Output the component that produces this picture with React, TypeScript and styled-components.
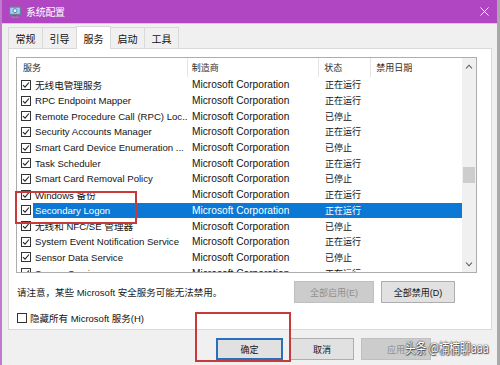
import styled, { createGlobalStyle, css } from 'styled-components';

const GlobalStyle = createGlobalStyle`
    html, body {
        margin: 0;
        padding: 0;
        width: 500px;
        height: 365px;
        overflow: hidden;
        background: #ffffff;
    }
    * {
        box-sizing: border-box;
    }
`;

const FONT = `"Liberation Sans", "Noto Sans CJK SC", sans-serif`;

const Window = styled.div`
    position: relative;
    width: 500px;
    height: 365px;
    display: flex;
    flex-direction: column;
    background: #f0f0f0;
    border-left: 2px solid #c07ccc;
    border-right: 3px solid #a9a9a9;
    font-family: ${FONT};
    color: #111;
    overflow: hidden;
`;

const TitleBar = styled.div`
    height: 24px;
    flex-shrink: 0;
    display: flex;
    align-items: center;
    padding: 0 8px 0 6px;
    background: #b046c1;
    border-bottom: 1px solid #eab8ee;
    color: #fff;
    font-size: 10px;
`;

const TitleText = styled.span`
    margin-left: 4px;
    flex: 1;
    letter-spacing: -0.3px;
`;

const Tabs = styled.div`
    display: flex;
    align-items: flex-end;
    height: 24px;
    padding-left: 6px;
`;

const Tab = styled.div<{ $active?: boolean }>`
    width: 35px;
    height: 21px;
    display: flex;
    align-items: center;
    justify-content: center;
    font-size: 10px;
    border: 1px solid #d9d9d9;
    border-bottom: none;
    margin-right: -1px;
    background: #f0f0f0;
    ${(p) =>
        p.$active &&
        css`
            height: 23px;
            background: #ffffff;
            position: relative;
            z-index: 1;
            margin-bottom: -1px;
        `}
`;

const Panel = styled.div`
    margin: 0 5px 0 6px;
    height: 282px;
    background: #ffffff;
    border: 1px solid #d9d9d9;
    padding: 8px 14px 0 7px;
    display: flex;
    flex-direction: column;
`;

const ListBox = styled.div`
    height: 216px;
    border: 1px solid #adadad;
    display: flex;
    overflow: hidden;
`;

const ListContent = styled.div`
    width: 446px;
    display: flex;
    flex-direction: column;
    overflow: hidden;
`;

const HeaderRow = styled.div`
    height: 19px;
    display: flex;
    flex-shrink: 0;
    font-size: 9px;
    color: #2b2b2b;
`;

const HeaderCell = styled.div<{ $w: number; $pad: number; $last?: boolean }>`
    width: ${(p) => p.$w}px;
    padding-left: ${(p) => p.$pad}px;
    display: flex;
    align-items: center;
    border-right: ${(p) => (p.$last ? 'none' : '1px solid #e5e5e5')};
`;

const Row = styled.div`
    height: 15.7px;
    display: flex;
    align-items: center;
    flex-shrink: 0;
`;

const CheckArea = styled.div`
    width: 16px;
    height: 100%;
    display: flex;
    align-items: center;
    padding-left: 4px;
`;

const Box = styled.span`
    width: 10px;
    height: 10px;
    border: 1px solid #333;
    background: #fff;
    display: flex;
    align-items: center;
    justify-content: center;
`;

const RowBody = styled.div<{ $selected?: boolean }>`
    flex: 1;
    height: 100%;
    display: flex;
    align-items: center;
    background: ${(p) => (p.$selected ? '#0a78d4' : 'transparent')};
    color: ${(p) => (p.$selected ? '#ffffff' : '#141414')};
`;

const Cell = styled.div<{ $w: number; $pad: number; $size: number }>`
    width: ${(p) => p.$w}px;
    padding-left: ${(p) => p.$pad}px;
    white-space: nowrap;
    overflow: hidden;
    font-size: ${(p) => p.$size}px;
`;

const ScrollBar = styled.div`
    width: 14px;
    background: #f0f0f0;
    display: flex;
    flex-direction: column;
    align-items: center;
    padding-top: 4px;
`;

const ScrollThumb = styled.div`
    width: 12px;
    height: 16px;
    margin-top: 97px;
    background: #cdcdcd;
`;

const ScrollArrow = styled.div<{ $down?: boolean }>`
    margin-top: ${(p) => (p.$down ? 'auto' : '0')};
    margin-bottom: ${(p) => (p.$down ? '4px' : '0')};
    height: 8px;
    display: flex;
    align-items: center;
`;

const NoticeRow = styled.div`
    margin-top: 8px;
    height: 22px;
    display: flex;
    align-items: center;
    padding-left: 1px;
    padding-right: 22px;
`;

const NoticeText = styled.span`
    flex: 1;
    font-size: 9.5px;
    color: #1a1a1a;
`;

const Button = styled.div<{ $w: number; $disabled?: boolean; $focused?: boolean }>`
    width: ${(p) => p.$w}px;
    height: 22px;
    display: flex;
    align-items: center;
    justify-content: center;
    font-size: 9px;
    background: ${(p) => (p.$disabled ? '#cccccc' : '#e1e1e1')};
    border: 1px solid ${(p) => (p.$disabled ? '#bfbfbf' : '#adadad')};
    color: ${(p) => (p.$disabled ? '#8f8f8f' : '#141414')};
    ${(p) =>
        p.$focused &&
        css`
            border: 2px solid #2a6fb8;
        `}
`;

const ButtonGroup = styled.div<{ $gap: number }>`
    display: flex;
    gap: ${(p) => p.$gap}px;
`;

const HideRow = styled.div`
    margin-top: 8px;
    display: flex;
    align-items: center;
    gap: 3px;
    padding-left: 1px;
    font-size: 9.5px;
`;

const BottomBar = styled.div`
    flex: 1;
    display: flex;
    justify-content: flex-start;
    padding: 8px 0 0 214px;
`;

const Annotation = styled.div<{ $x: number; $y: number; $w: number; $h: number }>`
    position: absolute;
    left: ${(p) => p.$x}px;
    top: ${(p) => p.$y}px;
    width: ${(p) => p.$w}px;
    height: ${(p) => p.$h}px;
    border: 2px solid #c83a3a;
    pointer-events: none;
`;

const Watermark = styled.div`
    position: absolute;
    left: 403px;
    top: 337px;
    font-family: "Noto Sans CJK SC", sans-serif;
    font-size: 14px;
    white-space: nowrap;
    color: #ffffff;
    transform: scaleX(0.76);
    transform-origin: left center;
    text-shadow: 0 0 2px #333, 0 0 1px #333, 1px 1px 1px #555;
`;

type Service = { name: string; status: string; selected?: boolean };

const services: Service[] = [
    { name: '无线电管理服务', status: '正在运行' },
    { name: 'RPC Endpoint Mapper', status: '正在运行' },
    { name: 'Remote Procedure Call (RPC) Loc...', status: '已停止' },
    { name: 'Security Accounts Manager', status: '正在运行' },
    { name: 'Smart Card Device Enumeration ...', status: '已停止' },
    { name: 'Task Scheduler', status: '正在运行' },
    { name: 'Smart Card Removal Policy', status: '已停止' },
    { name: 'Windows 备份', status: '正在运行' },
    { name: 'Secondary Logon', status: '正在运行', selected: true },
    { name: '无线和 NFC/SE 管理器', status: '已停止' },
    { name: 'System Event Notification Service', status: '正在运行' },
    { name: 'Sensor Data Service', status: '已停止' },
    { name: 'Sensor Service', status: '正在运行' },
];

function Check({ checked = true }: { checked?: boolean }) {
    return (
        <Box>
            {checked && (
                <svg width="8" height="8" viewBox="0 0 8 8">
                    <path d="M1 4.2 L3 6.2 L7 1.5" stroke="#222" strokeWidth="1.1" fill="none" />
                </svg>
            )}
        </Box>
    );
}

function AppIcon() {
    return (
        <svg width="14" height="14" viewBox="0 0 14 14">
            <rect x="1" y="1.5" width="12" height="8.5" rx="1" fill="#6d7f9a" />
            <rect x="2.2" y="2.7" width="9.6" height="6.1" fill="#9fd0f4" />
            <circle cx="7" cy="5.7" r="2" fill="#e8f0f8" stroke="#4a6a90" strokeWidth="0.8" />
            <rect x="5.5" y="10" width="3" height="1.6" fill="#5a6878" />
            <rect x="3.5" y="11.5" width="7" height="1.3" fill="#8592a2" />
        </svg>
    );
}

export default function App() {
    return (
        <>
            <GlobalStyle />
            <Window>
                <TitleBar>
                    <AppIcon />
                    <TitleText>系统配置</TitleText>
                    <svg width="9" height="9" viewBox="0 0 9 9">
                        <path d="M0.5 0.5 L8.5 8.5 M8.5 0.5 L0.5 8.5" stroke="#fff" strokeWidth="1" />
                    </svg>
                </TitleBar>

                <Tabs>
                    <Tab>常规</Tab>
                    <Tab>引导</Tab>
                    <Tab $active>服务</Tab>
                    <Tab>启动</Tab>
                    <Tab>工具</Tab>
                </Tabs>

                <Panel>
                    <ListBox>
                        <ListContent>
                            <HeaderRow>
                                <HeaderCell $w={171} $pad={6}>服务</HeaderCell>
                                <HeaderCell $w={132} $pad={4}>制造商</HeaderCell>
                                <HeaderCell $w={52} $pad={5}>状态</HeaderCell>
                                <HeaderCell $w={91} $pad={5} $last>禁用日期</HeaderCell>
                            </HeaderRow>
                            {services.map((s) => (
                                <Row key={s.name}>
                                    <CheckArea>
                                        <Check />
                                    </CheckArea>
                                    <RowBody $selected={s.selected}>
                                        <Cell $w={155} $pad={2} $size={9.6}>{s.name}</Cell>
                                        <Cell $w={132} $pad={4} $size={10.2}>Microsoft Corporation</Cell>
                                        <Cell $w={52} $pad={5} $size={9}>{s.status}</Cell>
                                    </RowBody>
                                </Row>
                            ))}
                        </ListContent>
                        <ScrollBar>
                            <ScrollArrow>
                                <svg width="8" height="5" viewBox="0 0 8 5">
                                    <path d="M1 4.5 L4 1.2 L7 4.5" stroke="#555" strokeWidth="1.1" fill="none" />
                                </svg>
                            </ScrollArrow>
                            <ScrollThumb />
                            <ScrollArrow $down>
                                <svg width="8" height="5" viewBox="0 0 8 5">
                                    <path d="M1 0.5 L4 3.8 L7 0.5" stroke="#555" strokeWidth="1.1" fill="none" />
                                </svg>
                            </ScrollArrow>
                        </ScrollBar>
                    </ListBox>

                    <NoticeRow>
                        <NoticeText>请注意，某些 Microsoft 安全服务可能无法禁用。</NoticeText>
                        <ButtonGroup $gap={7}>
                            <Button $w={80} $disabled>全部启用(E)</Button>
                            <Button $w={74}>全部禁用(D)</Button>
                        </ButtonGroup>
                    </NoticeRow>

                    <HideRow>
                        <Check checked={false} />
                        <span>隐藏所有 Microsoft 服务(H)</span>
                    </HideRow>
                </Panel>

                <BottomBar>
                    <ButtonGroup $gap={7}>
                        <Button $w={67} $focused>确定</Button>
                        <Button $w={64}>取消</Button>
                        <Button $w={70} $disabled>应用</Button>
                    </ButtonGroup>
                </BottomBar>

                <Annotation $x={13} $y={191} $w={122} $h={33} />
                <Annotation $x={193} $y={312} $w={96} $h={50} />
                <Watermark>头条 @楠楠聊aaa</Watermark>
            </Window>
        </>
    );
}
